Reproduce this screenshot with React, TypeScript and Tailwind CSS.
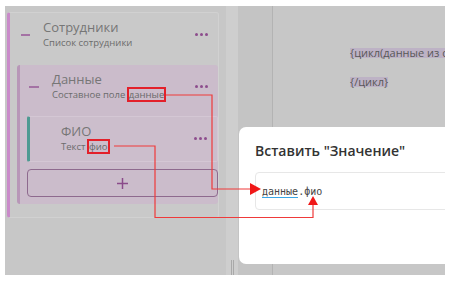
import React from 'react'

const Dots = () => (
  <div className="flex gap-[2px] mt-[20px]">
    <span className="w-[3px] h-[3px] rounded-full bg-[#8d4d8d]" />
    <span className="w-[3px] h-[3px] rounded-full bg-[#8d4d8d]" />
    <span className="w-[3px] h-[3px] rounded-full bg-[#8d4d8d]" />
  </div>
)

const Minus = ({ w }: { w: number }) => (
  <span className="block h-[1.5px] mt-[21px] bg-[#a472a4]" style={{ width: w }} />
)

const Mark = ({ children }: { children: React.ReactNode }) => (
  <span className="outline-2 outline-[#e3202a] -outline-offset-1 px-[1px] text-[#686868]">{children}</span>
)

const Title = ({ title, sub }: { title: string; sub: React.ReactNode }) => (
  <div className="flex-1 flex flex-col pt-[6px]">
    <span className="text-[13px] leading-[16px] text-[#767676]">{title}</span>
    <span className="text-[9.5px] leading-[13px] text-[#6c6c6c] mt-[1px]">{sub}</span>
  </div>
)

export default function App() {
  return (
    <div
      className="relative w-[454px] h-[286px] bg-white pl-[5px] pt-[6px]"
      style={{ fontFamily: '"Open Sans", "Noto Sans", sans-serif' }}
    >
      <div className="relative flex w-[440px] h-[269px] bg-[#c7c7c7] overflow-hidden">
        {/* left panel */}
        <div className="w-[221px] shrink-0 pl-[2px] pt-[6px]">
          <div className="w-[212px] bg-[#c9c9c9] border border-[#d1d1d1] border-l-[3px] border-l-[#c98ac9] rounded-[3px] pb-[13px]">
            <div className="h-[52px] flex items-start pl-[11px] pr-[10px] gap-[13px]">
              <Minus w={9} />
              <Title title="Сотрудники" sub="Список сотрудники" />
              <Dots />
            </div>
            <div className="pl-[7px]">
              <div className="bg-[#cbbccb] border-l-[3px] border-l-[#b897b8] rounded-[3px] pb-[7px]">
                <div className="h-[51px] flex items-start pl-[9px] pr-[10px] gap-[13px]">
                  <Minus w={10} />
                  <Title title="Данные" sub={<>Составное поле <Mark>данные</Mark></>} />
                  <Dots />
                </div>
                <div className="pl-[7px] flex flex-col gap-[7px]">
                  <div className="h-[46px] flex items-start bg-[#ccbecc] border border-[#d4c7d4] border-l-[3px] border-l-[#4e9a92] rounded-[2px] pl-[31px] pr-[10px]">
                    <Title title="ФИО" sub={<>Текст <Mark>фио</Mark></>} />
                    <Dots />
                  </div>
                  <div className="h-[28px] flex items-center justify-center border border-[#8e6a8e] rounded-[4px]">
                    <svg width="13" height="13" viewBox="0 0 13 13">
                      <path d="M6.5 1v11M1 6.5h11" stroke="#8a4b8a" strokeWidth="1.5" />
                    </svg>
                  </div>
                </div>
              </div>
            </div>
          </div>
        </div>

        {/* splitter */}
        <div className="w-[12px] shrink-0 bg-[#cecece] flex flex-col justify-end items-center">
          <div className="flex gap-[1px] h-[15px]">
            <span className="w-[1px] bg-[#a9a9a9]" />
            <span className="w-[1px] bg-[#a9a9a9]" />
          </div>
        </div>
        <div className="w-[35px] shrink-0 bg-[#c4c4c4] border-r border-[#b3b3b3]" />

        {/* document */}
        <div className="flex-1 min-w-0 overflow-hidden pl-[77px] pt-[42px] text-[11px] leading-[10px] text-[#585858] whitespace-nowrap">
          <div>
            <span className="inline-block h-[10px] bg-[#bdb2c5]">{'{цикл(данные из со'}</span>
          </div>
          <div className="mt-[19px]">
            <span className="inline-block h-[10px] bg-[#bdb2c5]">{'{/цикл}'}</span>
          </div>
        </div>

        {/* dialog */}
        <div className="absolute left-[234px] top-[121px] w-[230px] h-[137px] bg-white rounded-[7px] pl-[16px] pt-[14px]">
          <div className="text-[14px] leading-[20px] font-semibold text-[#333333]">Вставить "Значение"</div>
          <div className="mt-[11px] h-[38px] border border-[#e7e7e7] rounded-[4px] pl-[6px] flex items-center">
            <span
              className="text-[10px] text-[#444444]"
              style={{ fontFamily: '"DejaVu Sans Mono", "Liberation Mono", monospace' }}
            >
              <span className="border-b-[1.5px] border-[#3aa6e6]">данные</span>.фио
            </span>
          </div>
        </div>
      </div>

      {/* annotation arrows */}
      <svg className="absolute inset-0 pointer-events-none" width="454" height="286" viewBox="0 0 454 286">
        <g fill="none" stroke="#ef3a3a" strokeWidth="1.2">
          <path d="M166 95H212V189H251" />
          <path d="M114 146H155V217.5H313V205" />
        </g>
        <path d="M250 183L261 189L250 195Z" fill="#f01818" />
        <path d="M308 205L313 196L318 205Z" fill="#f01818" />
      </svg>
    </div>
  )
}
